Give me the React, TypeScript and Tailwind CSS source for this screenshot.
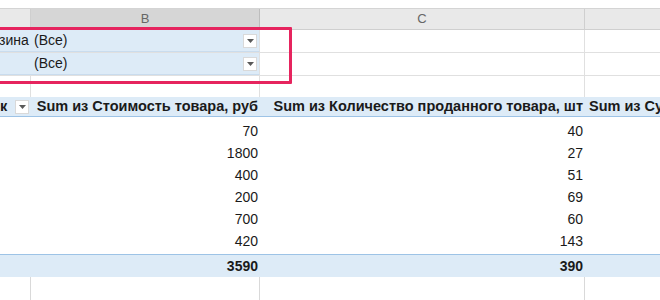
const cols = 'grid grid-cols-[31px_229px_325px_75px]'

function Dropdown() {
  return (
    <span className="flex items-center justify-center w-[14px] h-[14px] bg-white border border-[#d9d9d9]">
      <svg width="7" height="4" viewBox="0 0 7 4">
        <path d="M0 0h7L3.5 4z" fill="#595959" />
      </svg>
    </span>
  )
}

const rows = [
  ['70', '40'],
  ['1800', '27'],
  ['400', '51'],
  ['200', '69'],
  ['700', '60'],
  ['420', '143'],
]

export default function App() {
  return (
    <div className="relative w-[660px] h-[300px] overflow-hidden bg-white text-[14px] text-[#1a1a1a] font-['Liberation_Sans',sans-serif]">
      {/* formula bar remnant */}
      <div className="h-[9px] border-b border-[#d4d4d4] bg-white" />

      {/* column headers */}
      <div className={`${cols} h-[21px] bg-[#e9e9e9] text-[#666] text-[13px] border-b border-[#cfcfcf]`}>
        <div className="border-r border-[#cfcfcf]" />
        <div className="flex items-center justify-center bg-[#d6d6d6] border-r border-[#bdbdbd]">B</div>
        <div className="flex items-center justify-center border-r border-[#cfcfcf]">C</div>
        <div />
      </div>

      {/* filter rows */}
      {['зина', ''].map((label, i) => (
        <div key={i} className={`${cols} h-[23px] border-b border-[#e0e0e0]`}>
          <div className="flex items-center bg-[#ddebf7] border-b border-[#c9dcee] overflow-hidden whitespace-nowrap">
            <span className="-ml-[1px]">{label}</span>
          </div>
          <div className="flex items-center justify-between pl-[3px] pr-[2px] bg-[#ddebf7] border-b border-[#c9dcee] border-r border-r-[#e0e0e0]">
            <span>(Все)</span>
            <Dropdown />
          </div>
          <div className="border-r border-[#e0e0e0]" />
          <div />
        </div>
      ))}

      {/* empty row */}
      <div className={`${cols} h-[21px]`}>
        <div className="border-r border-[#e0e0e0]" />
        <div className="border-r border-[#e0e0e0]" />
        <div className="border-r border-[#e0e0e0]" />
        <div />
      </div>

      {/* pivot header */}
      <div className={`${cols} h-[20px] bg-[#ddebf7] border-b border-[#9dc3e6] font-bold text-[14.5px] whitespace-nowrap`}>
        <div className="flex items-center justify-between pr-[2px] overflow-hidden">
          <span>к</span>
          <Dropdown />
        </div>
        <div className="flex items-center justify-end pr-[2px] overflow-hidden">Sum из Стоимость товара, руб</div>
        <div className="flex items-center justify-end pr-[2px] overflow-hidden">Sum из Количество проданного товара, шт</div>
        <div className="flex items-center pl-[4px] overflow-hidden">Sum из Су</div>
      </div>

      {/* data rows */}
      <div className="pt-[3px]">
        {rows.map(([a, b]) => (
          <div key={a} className={`${cols} h-[22px] items-center`}>
            <div />
            <div className="text-right pr-[2px]">{a}</div>
            <div className="text-right pr-[2px]">{b}</div>
            <div />
          </div>
        ))}
      </div>

      {/* grand total */}
      <div className={`${cols} h-[23px] mt-[2px] items-center bg-[#ddebf7] border-t border-[#9dc3e6] font-bold`}>
        <div />
        <div className="text-right pr-[2px]">3590</div>
        <div className="text-right pr-[2px]">390</div>
        <div />
      </div>

      {/* empty row below */}
      <div className={`${cols} h-[24px] border-b border-[#d4d4d4]`}>
        <div className="border-r border-[#d9d9d9]" />
        <div className="border-r border-[#d9d9d9]" />
        <div className="border-r border-[#d9d9d9]" />
        <div />
      </div>

      {/* highlight frame */}
      <div className="absolute left-[-10px] top-[27px] w-[302px] h-[57px] border-[3px] border-[#e6245e] rounded-[1px]" />
    </div>
  )
}
